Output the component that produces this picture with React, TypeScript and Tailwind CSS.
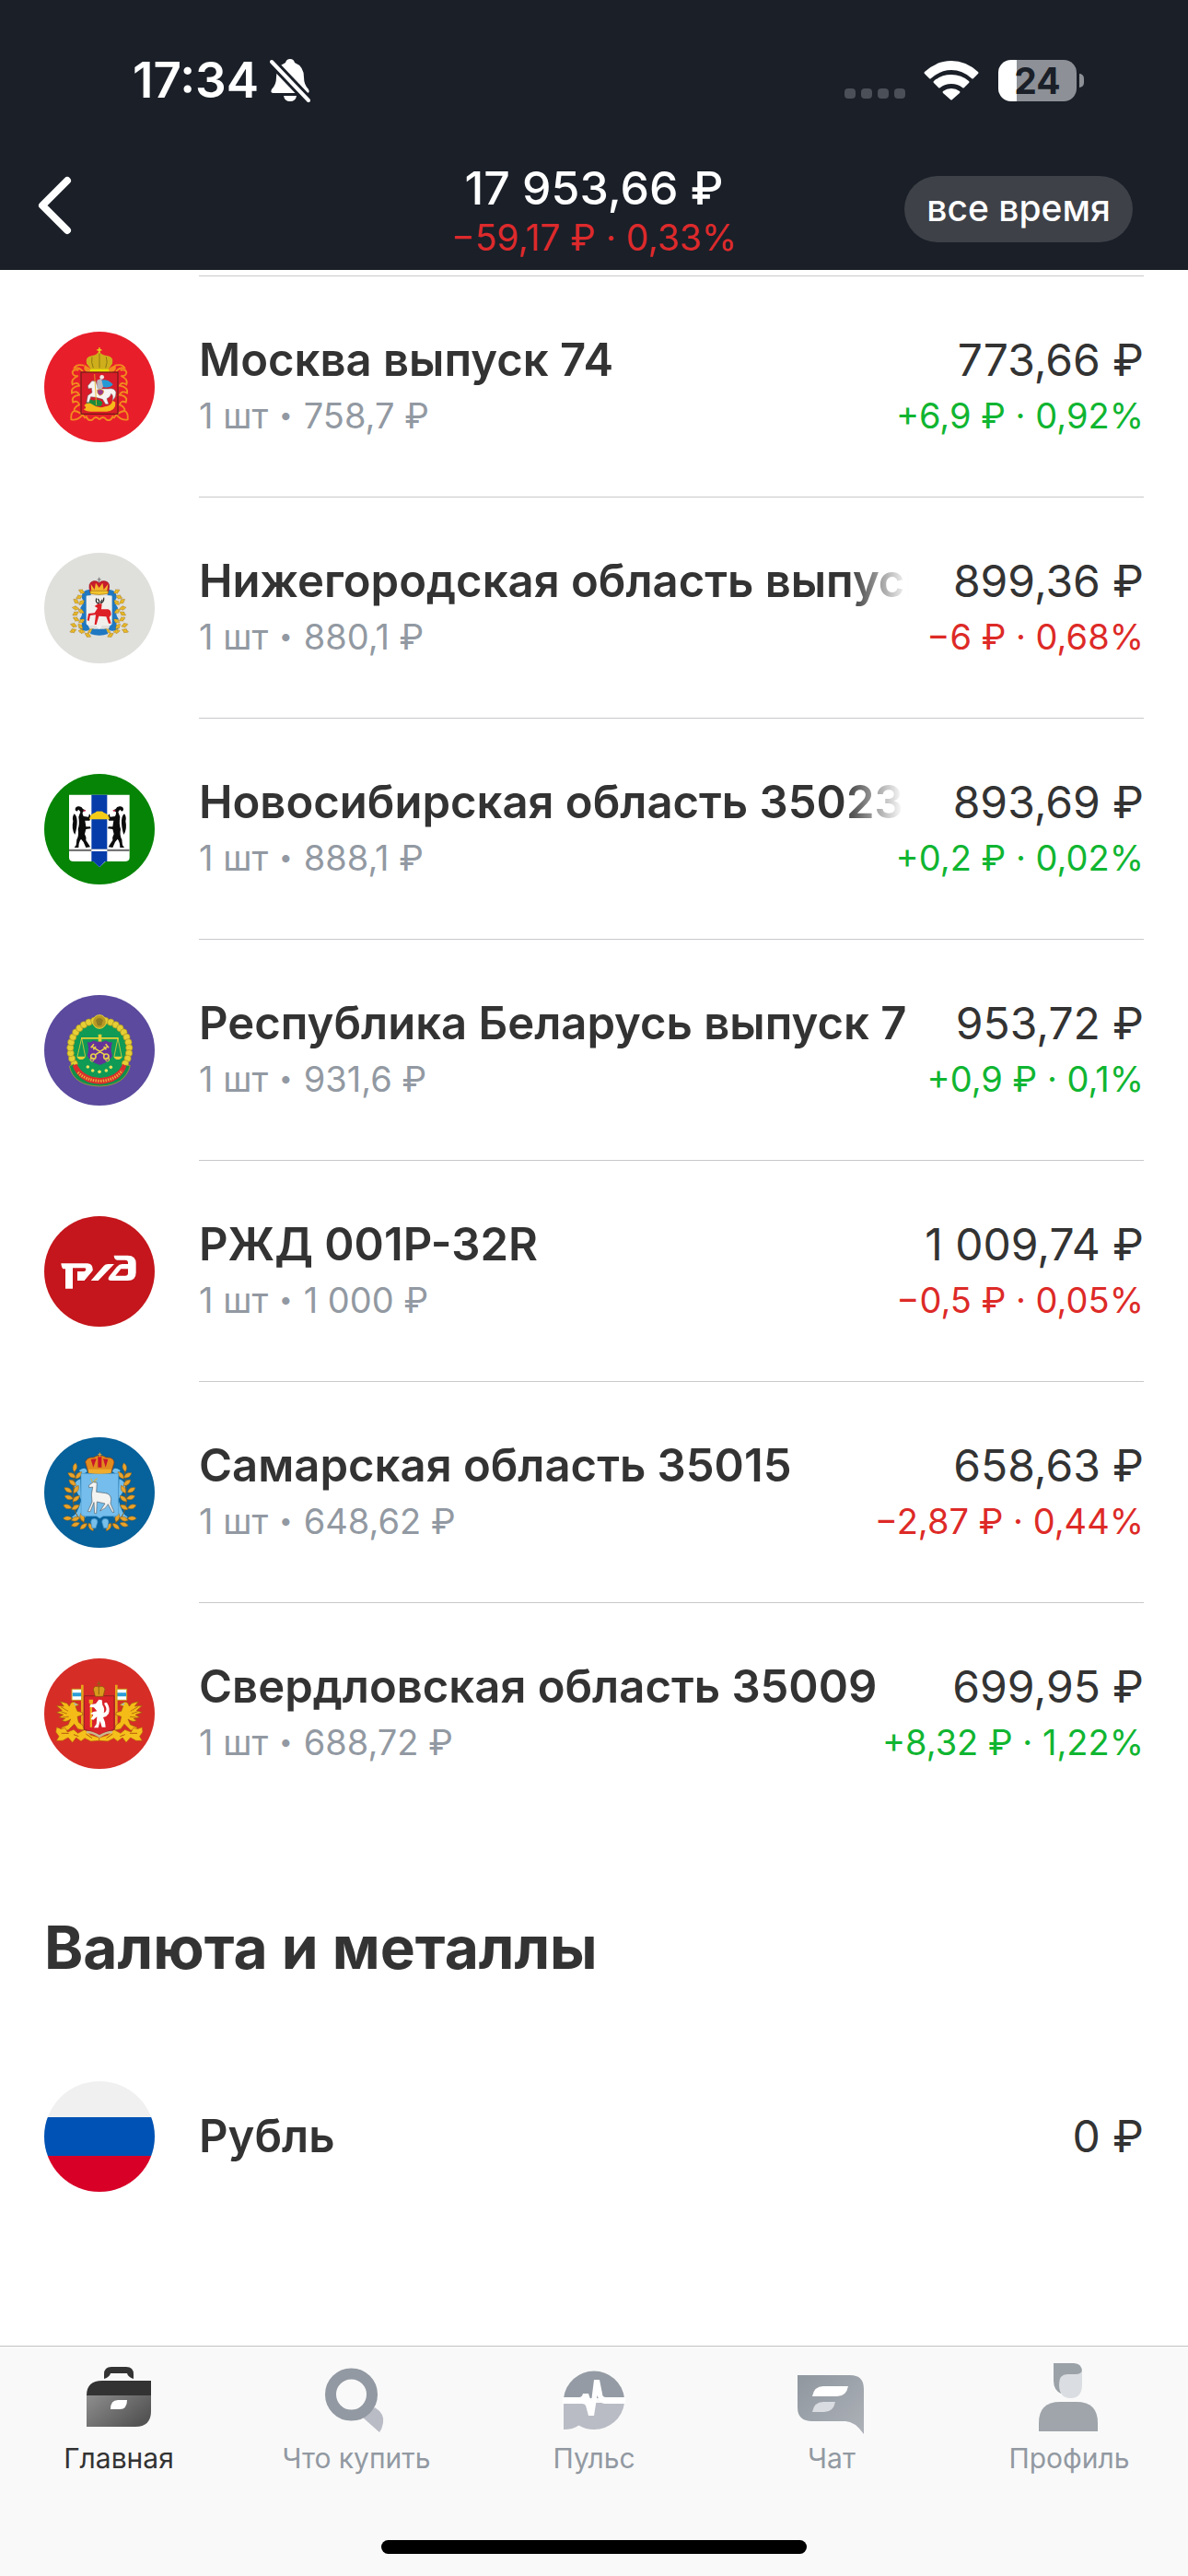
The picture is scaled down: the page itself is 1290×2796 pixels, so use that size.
import React from "react";

type Tone = "up" | "down";

function Leaf({ x, y, r = 0, fill = "#f2a51f", s = 1 }: { x: number; y: number; r?: number; fill?: string; s?: number }) {
  return <path d="M-13 0Q0-12 13 0Q0 12-13 0Z" fill={fill} stroke="#8a5a14" strokeWidth="1.2" transform={`translate(${x} ${y}) rotate(${r}) scale(${s})`} />;
}

function Badge({ bg, children }: { bg: string; children?: React.ReactNode }) {
  return (
    <svg viewBox="54 60 360 360" className="size-[120px] shrink-0 rounded-full" aria-hidden="true">
      <rect x="54" y="60" width="360" height="360" fill={bg} />
      {children}
    </svg>
  );
}

function MoscowRegion() {
  const ribbon = (
    <path
      d="M166 186Q150 180 146 192Q146 206 164 204Q140 214 146 232Q164 222 168 236Q140 240 144 260Q162 250 168 266Q140 270 148 290Q164 282 168 298Q150 306 152 318Q140 322 142 346Q160 350 176 334M152 318Q172 320 188 342M184 170Q158 164 152 178Q170 176 180 190M190 334Q196 354 212 346Q222 332 234 346"
      fill="none"
      stroke="#f28c1e"
      strokeWidth="5.500"
    />
  );
  return (
    <Badge bg="#e81e2b">
      {ribbon}
      <g transform="translate(468 0) scale(-1 1)">{ribbon}</g>
      <path d="M186 168Q204 178 210 188H258Q266 176 286 168Q292 186 276 192H194Q178 184 186 168Z" fill="#f28c1e" />
      <path d="M192 164Q186 142 210 138Q226 136 232 124Q240 136 258 138Q282 142 276 164Q268 176 262 184H206Q200 172 192 164Z" fill="#cfae1c" />
      <path d="M204 182H264L266 190H202Z" fill="#e9e200" />
      <path d="M210 142Q206 160 214 178M234 130V178M256 142Q262 160 254 178" stroke="#8d7a10" strokeWidth="3" fill="none" />
      <path d="M231 112h5v5h5v5h-5v8h-5v-8h-5v-5h5z" fill="#e8c81d" />
      <rect x="174" y="192" width="120" height="136" fill="#d91c29" stroke="#5d1b14" strokeWidth="3" />
      <path d="M190 290Q204 276 214 284Q232 276 244 290L240 302H204Z" fill="#1c8a3c" />
      <path d="M184 300Q196 288 210 296Q230 312 252 304Q276 300 276 284L286 290Q288 316 258 320H212Q192 322 182 312Q196 310 184 300Z" fill="#f7b91a" />
      <path d="M196 236L210 220L222 222L230 246H262Q284 242 288 258Q288 276 276 284Q280 266 272 262Q270 274 258 278L264 296H254L244 280L222 274L206 272L200 290H192L196 268L210 258L208 244L198 246Z" fill="#f6f3f2" stroke="#6e5d63" strokeWidth="1.5" />
      <path d="M236 218Q262 212 278 232Q266 246 246 240Z" fill="#2499d6" />
      <path d="M226 218L240 212L246 240L236 252L226 244Z" fill="#b9b7bd" />
      <circle cx="242" cy="208" r="7" fill="#efe7e4" />
      <path d="M226 250Q240 244 248 252Q248 266 234 268Q226 262 226 250Z" fill="#9a3a8a" stroke="#e8b01c" strokeWidth="2" />
      <path d="M218 198L224 300" stroke="#e8b01c" strokeWidth="2.5" />
    </Badge>
  );
}

function NizhnyRegion() {
  const side: [number, number, number][] = [
    [176, 186, 30], [168, 204, -20], [158, 218, 40], [176, 222, -40], [156, 240, 10], [174, 250, 30], [156, 258, -30],
    [158, 276, 30], [176, 282, -30], [150, 296, 20], [172, 300, 50], [148, 314, -20], [176, 316, 10], [196, 328, 30], [206, 314, -30],
  ];
  const half = (
    <>
      <path d="M200 182Q178 184 178 206Q190 220 174 240Q186 256 172 276Q186 292 172 306Q190 318 200 308Q192 296 192 280Q196 260 190 240Q196 210 190 198L204 196Z" fill="#1f78c1" stroke="#1f78c1" strokeWidth="4" />
      {side.map(([x, y, r]) => (
        <Leaf key={`${x}-${y}`} x={x} y={y} r={r} fill="#f3c52c" s={0.85} />
      ))}
      {side.map(([x, y, r]) => (
        <Leaf key={`b${x}-${y}`} x={x} y={y} r={r + 80} fill="#f3c52c" s={0.6} />
      ))}
    </>
  );
  return (
    <Badge bg="#dfdfdc">
      {half}
      <g transform="translate(466 0) scale(-1 1)">{half}</g>
      <path d="M210 308H256L262 324Q234 334 204 324Z" fill="#1f78c1" />
      <path d="M191 200H275V290Q274 297 262 297H243L233 306L223 297H204Q192 297 191 290Z" fill="#f0efec" />
      <path d="M204 190Q194 156 214 152Q226 150 233 158Q240 150 252 152Q274 156 262 190Z" fill="#c81c2c" stroke="#8b151c" strokeWidth="1.5" />
      <path d="M208 188L206 162L218 180L222 158L233 174L244 158L248 180L262 162L258 188Z" fill="#f3b72c" />
      <path d="M204 184H262V193Q233 200 204 193Z" fill="#f3c52c" stroke="#8a5a14" strokeWidth="1.5" />
      <path d="M233 140V156M227 147H239" stroke="#777" strokeWidth="3" />
      <path d="M232 226Q220 222 224 208M232 226Q236 216 228 210M238 224Q250 220 248 206M238 224Q240 214 244 212" fill="none" stroke="#222" strokeWidth="3.5" />
      <path d="M218 234L230 226L242 226L240 244H262Q272 246 272 262L266 270L272 290H264L256 268L232 266L224 294H218L222 262L204 264L200 282L194 280L198 258L218 256L228 240Z" fill="#dd1f26" />
      <path d="M226 302h14M233 296v12" stroke="#f5f5f5" strokeWidth="4" />
    </Badge>
  );
}

function NovosibirskRegion() {
  const sable = (
    <g fill="#0b0b0b">
      <path d="M155 178Q154 168 164 166Q176 164 180 174L190 179L180 183Q176 190 182 198L198 200L201 190L208 200L202 212L187 212L190 232L204 232L206 238L190 240L186 256Q192 266 190 276L198 288L204 298L190 300L182 282L174 272Q166 282 166 300H152L158 292L160 274Q168 260 164 240Q170 222 166 200L172 184L166 176L160 182Z" />
      <path d="M152 190Q160 196 161 212Q162 232 154 258Q142 240 148 214Q144 200 152 190Z" />
      <path d="M179 179L189 177L187 183Z" fill="#e8325a" />
    </g>
  );
  return (
    <Badge bg="#068406">
      <path d="M135 128H332V332Q332 345 316 345H254L234 364L214 345H150Q135 345 135 332Z" fill="#fff" />
      <path d="M208 128H259V345H252L234 364L214 345H208Z" fill="#063caa" />
      <path d="M135 305H332V312H135Z" fill="#777" />
      <path d="M208 305H259V312H208Z" fill="#fff" />
      {sable}
      <g transform="translate(467 0) scale(-1 1)">{sable}</g>
      <path d="M201 208Q204 190 220 186Q224 181 234 182Q244 181 248 186Q264 190 267 208Z" fill="#f4cb17" />
    </Badge>
  );
}

function Belarus() {
  const beads = Array.from({ length: 23 }, (_, i) => {
    const a = ((150 + i * (240 / 22)) * Math.PI) / 180;
    return { x: 235 + 96 * Math.cos(a), y: 236 + 94 * Math.sin(a) };
  });
  return (
    <Badge bg="#5b4a9d">
      <circle cx="235" cy="240" r="98" fill="#0f9a55" />
      {beads.map((b) => (
        <circle key={b.x} cx={b.x} cy={b.y} r="11" fill="#e5cf35" stroke="#a88f1f" strokeWidth="2" />
      ))}
      <circle cx="234" cy="147" r="22" fill="#b99a24" stroke="#e5cf35" strokeWidth="3" />
      <path d="M222 142Q234 128 246 142L240 160H228Z" fill="#8d7a24" />
      <path d="M136 292Q150 356 236 357Q318 354 334 290L318 288Q302 330 236 332Q170 330 150 284Z" fill="#0f8f4c" stroke="#caa827" strokeWidth="2" />
      <path d="M146 290L160 284Q180 326 236 330Q292 326 310 284L322 292Q302 348 236 350Q168 348 146 290Z" fill="#dc2c2c" />
      <path d="M164 312Q190 338 236 340Q284 338 308 306" fill="none" stroke="#e8b93a" strokeWidth="9" strokeDasharray="4 4" />
      <path d="M174 198H230V188H241V198H296V203H241V212H230V203H174Z" fill="#e5cf35" />
      <path d="M176 200L162 260M176 200L188 260M294 200L282 260M294 200L306 260" stroke="#e5cf35" strokeWidth="2.5" />
      <path d="M160 260H189Q184 270 174 270Q164 270 160 260ZM280 260H309Q304 270 294 270Q284 270 280 260Z" fill="#e5cf35" />
      <path d="M194 214Q206 216 216 208Q226 214 235 212Q244 214 254 208Q264 216 276 214Q268 236 276 258Q266 278 235 288Q204 278 194 258Q202 236 194 214Z" fill="#64339a" />
      <g fill="none" stroke="#e8cf4a" strokeWidth="5">
        <path d="M208 226L250 254M262 226L222 254M206 232l10-12M214 238l8-10M264 232l-10-12M256 238l-8-10" />
        <circle cx="214" cy="260" r="8" />
        <circle cx="256" cy="260" r="8" />
        <circle cx="210" cy="270" r="6" strokeWidth="3" />
        <circle cx="260" cy="270" r="6" strokeWidth="3" />
      </g>
      {[[196, 294], [212, 306], [234, 310], [256, 306], [271, 295]].map(([x, y]) => (
        <circle key={x} cx={x} cy={y} r="5.5" fill="#e9df5a" />
      ))}
    </Badge>
  );
}

function Railways() {
  return (
    <Badge bg="#c4161c">
      <g fill="#fff">
        <path fillRule="evenodd" d="M109 214H194Q211 214 212 232Q213 238 207 243L184 270H162V240H184Q190 238 190 233Q190 229 184 229H147V296H123V232H116Q110 228 109 214Z" />
        <path d="M162 270L206 224L212 236L184 270Z" />
        <path d="M206 270L248 222Q253 216 262 216H282L230 270Z" />
        <path fillRule="evenodd" d="M281 188H326Q353 188 353 214V244Q353 270 326 270H274Q256 270 266 256L290 226Q298 216 308 216H327V212Q327 203 318 203H292Q282 202 281 188ZM304 232L286 254H318Q327 254 327 245V232Z" />
      </g>
    </Badge>
  );
}

function SamaraRegion() {
  const side: [number, number, number][] = [
    [154, 158, 100], [144, 184, 30], [166, 184, -50], [146, 208, 40], [132, 232, 30], [158, 230, -60], [134, 256, 20],
    [158, 260, -40], [130, 286, 20], [156, 288, -30], [130, 324, 0], [156, 326, -20], [178, 322, 70], [156, 344, -20], [182, 350, -40], [206, 352, 60],
  ];
  const half = (
    <>
      <path d="M168 168Q190 152 194 172L176 184ZM172 196Q150 204 152 224L174 262ZM172 270Q164 310 144 320Q160 338 178 316L190 322Z" fill="#76bfeb" />
      <path d="M158 150Q146 200 150 240Q142 290 168 326Q190 346 214 356" fill="none" stroke="#8b5a18" strokeWidth="3" />
      {side.map(([x, y, r]) => (
        <Leaf key={`${x}-${y}`} x={x} y={y} r={r} fill="#e9a32b" s={1.15} />
      ))}
      <path d="M206 336a10 10 0 1 1 22 0l-6 20h-12z" fill="#76bfeb" stroke="#3688c2" strokeWidth="2" />
    </>
  );
  return (
    <Badge bg="#07619a">
      {half}
      <g transform="translate(470 0) scale(-1 1)">{half}</g>
      <path d="M174 178H296V308Q296 317 284 317H246L235 324L224 317H186Q174 317 174 308Z" fill="#74bdec" stroke="#4a97cc" strokeWidth="2" />
      <path d="M198 176L188 140Q194 124 214 126Q228 118 235 120Q244 118 256 126Q280 124 282 142L272 176Z" fill="#e18a1e" stroke="#8c3a12" strokeWidth="2" />
      <path d="M206 132L214 158L224 130ZM262 132L254 158L246 130ZM229 124H241V158H229Z" fill="#c9152b" />
      <path d="M198 164H272V176Q235 182 198 176Z" fill="#f0ac2d" />
      <path d="M235 110V124M229 116H241" stroke="#e9a32b" strokeWidth="3" />
      <path d="M212 208L206 194M216 206Q216 196 228 194M218 208L224 200" stroke="#d9b13a" strokeWidth="3" fill="none" />
      <path d="M200 216L214 206L226 208L224 238L254 242Q270 244 272 262L270 276L282 304H276L262 278Q256 292 236 300L252 276L226 270L224 308H218L216 272L204 302L196 302L210 270L208 246L212 222L200 224Z" fill="#f3f3f1" stroke="#55606a" strokeWidth="2" />
    </Badge>
  );
}

function SverdlovskRegion() {
  const half = (
    <>
      <path d="M174 146H182V290H174Z" fill="#e8a41c" />
      <path d="M144 160H176V196H144Z" fill="#fff" />
      <path d="M146 172H176V184H146Z" fill="#2b9fd8" />
      <path d="M144 160H176V196H144Z" fill="none" stroke="#c99a18" strokeWidth="3" />
      <path d="M136 216Q140 200 152 202L168 212L156 216L162 232L178 236L180 244L162 250L166 268L180 278L184 294L164 290L152 274L132 294H106L112 284L132 276L140 258Q124 270 112 262L122 256L102 252L116 244L94 236L112 230L94 214L118 216L106 200L128 206Z" fill="#f5bb17" stroke="#9b5a10" strokeWidth="2" />
      <path d="M104 232L128 240M108 218L132 232M114 252L134 250" stroke="#b8740f" strokeWidth="3" />
      <path d="M150 204L164 210L154 214Z" fill="#a8b4bd" />
      <path d="M94 284L110 290L122 286L130 300L150 292L164 304L186 292L206 310L234 318V328L206 330L186 320L174 330L158 318L146 334L132 318L114 328L94 328L102 314L92 300Z" fill="#f5c01c" stroke="#b9590f" strokeWidth="2" />
      <path d="M110 304H134M150 308L166 314M190 306L210 320" stroke="#b9590f" strokeWidth="3" />
    </>
  );
  return (
    <Badge bg="#d62d27">
      {half}
      <g transform="translate(467 0) scale(-1 1)">{half}</g>
      <path d="M184 182H282V292Q260 296 234 310Q208 296 184 292Z" fill="#d9222a" stroke="#70221e" strokeWidth="2" />
      <path d="M220 184L214 160Q218 146 232 154Q246 146 252 160L246 184Z" fill="#d99b1c" stroke="#84500e" strokeWidth="2" />
      <path d="M232 134V154M226 142H238M232 156V178" stroke="#8a6512" strokeWidth="3" />
      <path d="M203 196H210V284H203ZM200 194H213V206H200Z" fill="#efae1c" />
      <path d="M222 208L232 194L242 196L244 212Q252 222 248 238Q262 232 254 216Q244 202 258 204Q270 222 264 240Q258 250 246 252L252 268L254 284H242L236 264L230 286H216L224 274L226 250L214 260L206 258L214 244L204 240L214 234L226 232L216 220L202 218L206 210Z" fill="#fff" />
      <path d="M192 300Q212 300 234 314Q256 300 276 300" fill="none" stroke="#c9b98c" strokeWidth="8" />
    </Badge>
  );
}

function Ruble() {
  return (
    <Badge bg="#f0f0f0">
      <path d="M54 177H414V303H54Z" fill="#0052b4" />
      <path d="M54 303H414V420H54Z" fill="#d80027" />
    </Badge>
  );
}

interface Position {
  name: string;
  price: string;
  amount: string;
  change: string;
  tone: Tone;
  Icon: () => React.JSX.Element;
  fade?: boolean;
}

const positions: Position[] = [
  { name: "Москва выпуск 74", price: "758,7 ₽", amount: "773,66 ₽", change: "+6,9 ₽ · 0,92%", tone: "up", Icon: MoscowRegion },
  { name: "Нижегородская область выпуск", price: "880,1 ₽", amount: "899,36 ₽", change: "−6 ₽ · 0,68%", tone: "down", Icon: NizhnyRegion, fade: true },
  { name: "Новосибирская область 35023", price: "888,1 ₽", amount: "893,69 ₽", change: "+0,2 ₽ · 0,02%", tone: "up", Icon: NovosibirskRegion, fade: true },
  { name: "Республика Беларусь выпуск 7", price: "931,6 ₽", amount: "953,72 ₽", change: "+0,9 ₽ · 0,1%", tone: "up", Icon: Belarus },
  { name: "РЖД 001Р-32R", price: "1 000 ₽", amount: "1 009,74 ₽", change: "−0,5 ₽ · 0,05%", tone: "down", Icon: Railways },
  { name: "Самарская область 35015", price: "648,62 ₽", amount: "658,63 ₽", change: "−2,87 ₽ · 0,44%", tone: "down", Icon: SamaraRegion },
  { name: "Свердловская область 35009", price: "688,72 ₽", amount: "699,95 ₽", change: "+8,32 ₽ · 1,22%", tone: "up", Icon: SverdlovskRegion },
];

function PositionRow({ item }: { item: Position }) {
  const { Icon } = item;
  return (
    <li className="flex items-start gap-12">
      <div className="pt-[61px]">
        <Icon />
      </div>
      <div className="h-60 min-w-0 flex-1 border-t border-[#c9c9cb] pt-[61px]">
        <div className="flex justify-between gap-12 leading-[60px] text-[#333]">
          <span
            className={
              item.fade
                ? "min-w-0 overflow-hidden text-[49px] font-semibold whitespace-nowrap [mask-image:linear-gradient(to_left,transparent,black_66px)]"
                : "min-w-0 text-[49px] font-semibold whitespace-nowrap"
            }
          >
            {item.name}
          </span>
          <span className="shrink-0 text-[48px] whitespace-nowrap">{item.amount}</span>
        </div>
        <div className="mt-1.5 flex justify-between text-[38px] leading-[48px]">
          <span className="flex items-center gap-3 text-[#9299a2]">
            <span>1 шт</span>
            <span className="text-[26px]">•</span>
            <span>{item.price}</span>
          </span>
          <span className={item.tone === "up" ? "text-[#10b531]" : "text-[#dd2a27]"}>{item.change}</span>
        </div>
      </div>
    </li>
  );
}

function StatusBar() {
  return (
    <div className="flex h-[174px] items-center justify-between pr-[113px] pl-36">
      <div className="flex items-center gap-3">
        <span className="text-[53px] leading-[60px] font-semibold">17:34</span>
        <svg viewBox="0 0 44 48" className="h-12 w-11" aria-hidden="true">
          <path d="M22 1Q26 1 27 5Q37 9 37 21Q37 29 42 34Q44 38 40 38H4Q0 38 2 34Q7 29 7 21Q7 9 17 5Q18 1 22 1ZM15 41H29Q28 47 22 47Q16 47 15 41Z" fill="#fff" />
          <path d="M2 4L42 46" stroke="#1a1f28" strokeWidth="10" />
          <path d="M2 4L42 46" stroke="#fff" strokeWidth="4" strokeLinecap="round" />
        </svg>
      </div>
      <div className="flex items-center">
        <svg viewBox="0 0 66 44" className="mr-5 h-11 w-[66px]" fill="#4b4f57" aria-hidden="true">
          <rect x="0" y="31" width="12" height="11" rx="4" />
          <rect x="18" y="31" width="12" height="11" rx="4" />
          <rect x="36" y="31" width="12" height="11" rx="4" />
          <rect x="54" y="31" width="12" height="11" rx="4" />
        </svg>
        <svg viewBox="0 0 60 44" className="mr-[21px] h-11 w-[60px]" fill="#fff" aria-hidden="true">
          <path d="M1 13Q14 1 30 1Q46 1 59 13Q60 14 59 15L54 20Q53 21 52 20Q42 11 30 11Q18 11 8 20Q7 21 6 20L1 15Q0 14 1 13Z" />
          <path d="M11 23Q19 16 30 16Q41 16 49 23Q50 24 49 25L44 30Q43 31 42 30Q37 26 30 26Q23 26 18 30Q17 31 16 30L11 25Q10 24 11 23Z" />
          <path d="M21 34Q25 31 30 31Q35 31 39 34Q40 35 39 36L31 43Q30 44 29 43L21 36Q20 35 21 34Z" />
        </svg>
        <div className="flex h-[45px] w-[85px] items-center justify-center rounded-[14px] bg-[linear-gradient(to_right,#fff_20px,#8d9096_20px)] text-[39px] leading-none font-bold text-[#1a1f28]">
          24
        </div>
        <div className="ml-[3px] h-[15px] w-[5px] rounded-r-full bg-[#8d9096]" />
      </div>
    </div>
  );
}

function Header() {
  return (
    <header className="bg-[#1a1f28] text-white">
      <StatusBar />
      <div className="grid h-[119px] grid-cols-[1fr_auto_1fr] items-start">
        <button type="button" aria-label="Назад" className="mt-[15px] ml-[38px] justify-self-start">
          <svg viewBox="0 0 44 68" className="h-[68px] w-11" fill="none" stroke="#fff" strokeWidth="8" strokeLinecap="round" strokeLinejoin="round" aria-hidden="true">
            <path d="M35 7L8 34L35 61" />
          </svg>
        </button>
        <div className="text-center">
          <h1 className="text-[50px] leading-[60px] font-medium">17 953,66 ₽</h1>
          <p className="text-[39px] leading-[48px] text-[#dd2a2c]">−59,17 ₽ · 0,33%</p>
        </div>
        <button type="button" className="mt-[17px] mr-[60px] h-[72px] justify-self-end rounded-full bg-[#3e4147] px-6 pb-1 text-[39px] leading-none font-medium">
          все время
        </button>
      </div>
    </header>
  );
}

const HomeIcon = (
  <>
    <defs>
      <linearGradient id="case" x1="0" y1="0" x2="1" y2="0.6">
        <stop offset="0" stopColor="#8e8e8e" />
        <stop offset="1" stopColor="#545454" />
      </linearGradient>
    </defs>
    <path d="M29 22V17Q29 9 37 9H53Q61 9 61 17V22Q55 20 54 16H36Q35 20 29 22Z" fill="#333" />
    <path d="M27 24H80V40H10Q10 24 27 24Z" fill="#333" />
    <path d="M10 40H80V57Q80 74 63 74H10Z" fill="url(#case)" />
    <path d="M36 55Q36 45 44 45H54Q54 55 46 55Z" fill="#fff" />
  </>
);

const SearchIcon = (
  <>
    <path d="M52 64L65 53Q76 60 74 70Q73 76 70 80Z" fill="#b9bcc5" />
    <circle cx="39.500" cy="39" r="22.500" fill="none" stroke="#9299a2" strokeWidth="12" />
  </>
);

const PulseIcon = (
  <>
    <path d="M12 43A33.200 33.200 0 0 1 78 43Z" fill="#949ba4" />
    <path d="M12 48H78A33 33 0 0 1 45 77Q36 77 28.500 72.500Q22 77 12 77Z" fill="#b9bcc5" />
    <path d="M11 42H29Q32 42 33 38H39L42 47L45 23H51L54 38Q54 42 58 42H79V49H57Q51 49 48.500 40L45 62H39L36 51Q35 49 32 49H11Z" fill="#fff" />
  </>
);

const ChatIcon = (
  <>
    <defs>
      <linearGradient id="chat" x1="0" y1="0" x2="1" y2="1">
        <stop offset="0" stopColor="#8f979f" />
        <stop offset="1" stopColor="#adb1b8" />
      </linearGradient>
    </defs>
    <path d="M8 18H65Q80 18 80 33V82Q70 68 60 68H24Q8 68 8 53Z" fill="url(#chat)" />
    <path d="M24 41Q26 30 36 30H63Q61 41 51 41Z" fill="#fff" />
    <path d="M24 58Q26 47 36 47H49Q47 58 37 58Z" fill="#d9dce1" />
  </>
);

const ProfileIcon = (
  <>
    <path d="M28 5H50Q59 5 59 15V28H36V38Q28 34 28 24Z" fill="#9ba2a8" />
    <path d="M34 28Q34 17 43 17H52Q58 17 59 13V28Q59 43 46.500 43Q34 43 34 28Z" fill="#dadee2" />
    <path d="M12 79V70Q12 47 35 47H53Q76 47 76 70V79Z" fill="#9fa5aa" />
  </>
);

const tabs = [
  { label: "Главная", icon: HomeIcon, active: true },
  { label: "Что купить", icon: SearchIcon, active: false },
  { label: "Пульс", icon: PulseIcon, active: false },
  { label: "Чат", icon: ChatIcon, active: false },
  { label: "Профиль", icon: ProfileIcon, active: false },
];

function TabBar() {
  return (
    <footer className="border-t border-[#c3c3c5] bg-[#f9f9f9]">
      <nav className="grid h-[210px] grid-cols-5">
        {tabs.map((tab) => (
          <a
            key={tab.label}
            href="#"
            aria-current={tab.active ? "page" : undefined}
            className={tab.active ? "flex flex-col items-center pt-[13px] text-[#333]" : "flex flex-col items-center pt-[13px] text-[#9299a2]"}
          >
            <svg viewBox="0 0 90 90" className="size-[90px]" aria-hidden="true">
              {tab.icon}
            </svg>
            <span className="text-[30px] leading-[36px]">{tab.label}</span>
          </a>
        ))}
      </nav>
      <div className="mx-auto mb-6 h-[15px] w-[462px] rounded-full bg-black" />
    </footer>
  );
}

export default function App() {
  return (
    <div className="flex min-h-screen flex-col bg-white font-['Inter','Liberation_Sans',sans-serif]">
      <Header />
      <main className="flex-1 px-12 pt-1.5">
        <ul>
          {positions.map((item) => (
            <PositionRow key={item.name} item={item} />
          ))}
        </ul>
        <h2 className="mt-[95px] text-[64px] leading-[80px] font-bold text-[#333]">Валюта и металлы</h2>
        <div className="mt-[105px] flex items-center gap-12 leading-[60px] text-[#333]">
          <Ruble />
          <span className="flex-1 text-[49px] font-semibold">Рубль</span>
          <span className="text-[48px]">0 ₽</span>
        </div>
      </main>
      <TabBar />
    </div>
  );
}
